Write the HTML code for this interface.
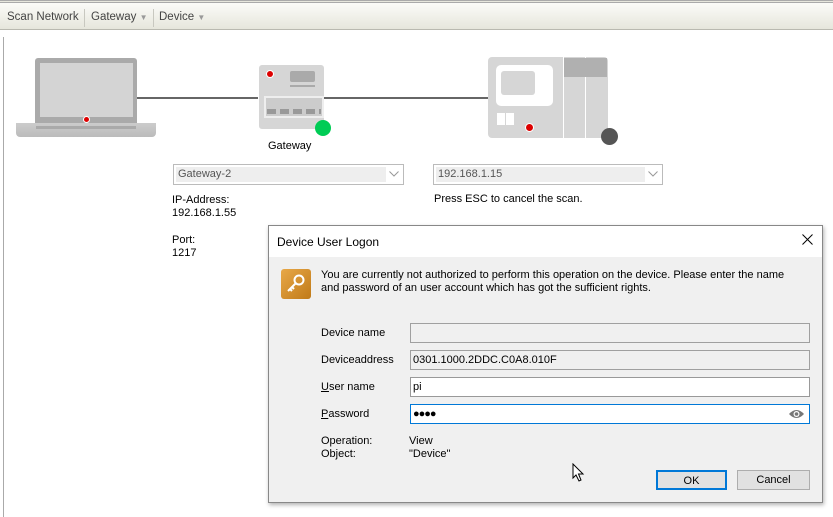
<!DOCTYPE html>
<html><head><meta charset="utf-8"><style>
*{box-sizing:border-box;margin:0;padding:0}
body{width:833px;height:514px;position:relative;overflow:hidden;background:#fff;font-family:"Liberation Sans",Tahoma,sans-serif;font-size:11px;color:#000}
.a{position:absolute}
.tb{left:0;top:0;width:833px;height:30px;border-top:3px double #aaa;background:linear-gradient(#fbfbf8,#e6e6dc);border-bottom:1px solid #b9b9b0;color:#444;font-size:11.5px}
.tb span{position:absolute;top:8px}
.sep{position:absolute;top:6px;width:1px;height:18px;background:#c8c8c0}
.combo{height:21px;border:1px solid #bbb;background:#fff;padding:2px}
.combo div{background:#eee;height:15px;color:#555;padding-left:2px;line-height:15px}
.inp{left:410px;width:400px;height:20px;border:1px solid #999;background:#fff;padding:3px 2px;line-height:13px}
.lbl{left:321px}
.btn{height:20px;border:1px solid #adadad;background:#e1e1e1;text-align:center;line-height:18px}
</style></head><body>
<div class="a tb"><span style="left:7px">Scan Network</span><div class="sep" style="left:84px"></div><span style="left:91px">Gateway <span style="position:static;color:#999;font-size:8px">▼</span></span><div class="sep" style="left:153px"></div><span style="left:159px">Device <span style="position:static;color:#999;font-size:8px">▼</span></span></div>
<div class="a" style="left:3px;top:37px;width:1px;height:480px;background:#aaa"></div>
<div class="a" style="left:137px;top:97px;width:121px;height:2px;background:#666"></div>
<div class="a" style="left:323px;top:97px;width:165px;height:2px;background:#666"></div>
<!-- laptop -->
<div class="a" style="left:35px;top:58px;width:102px;height:65px;background:#aaa;border-radius:3px 3px 0 0"></div>
<div class="a" style="left:40px;top:63px;width:93px;height:54px;background:#d4d4d4"></div>
<div class="a" style="left:84px;top:117px;width:5px;height:5px;border-radius:50%;background:#d00;box-shadow:0 0 0 1px #fff"></div>
<div class="a" style="left:16px;top:123px;width:140px;height:14px;background:linear-gradient(#ccc,#bbb);border-radius:0 0 4px 4px"></div>
<div class="a" style="left:36px;top:126px;width:100px;height:3px;background:#aaa"></div>
<!-- gateway -->
<div class="a" style="left:259px;top:65px;width:65px;height:64px;background:#d6d6d6;border-radius:3px"></div>
<div class="a" style="left:267px;top:71px;width:6px;height:6px;border-radius:50%;background:#d00;box-shadow:0 0 0 1px #fff"></div>
<div class="a" style="left:290px;top:71px;width:25px;height:11px;background:#aaa;border-radius:2px"></div>
<div class="a" style="left:290px;top:85px;width:25px;height:2px;background:#aaa"></div>
<div class="a" style="left:264px;top:96px;width:60px;height:22px;border:2px solid #eee;background:#ccc"></div>
<div class="a" style="left:267px;top:109px;width:54px;height:5px;background:repeating-linear-gradient(90deg,#999 0 9px,transparent 9px 13px)"></div>
<div class="a" style="left:315px;top:120px;width:16px;height:16px;border-radius:50%;background:#0c5"></div>
<div class="a" style="left:268px;top:140px">Gateway</div>
<!-- right device -->
<div class="a" style="left:488px;top:57px;width:120px;height:81px;background:#d6d6d6;border-radius:4px"></div>
<div class="a" style="left:496px;top:65px;width:57px;height:41px;background:#fff;border-radius:5px"></div>
<div class="a" style="left:501px;top:71px;width:34px;height:24px;background:#d6d6d6;border-radius:3px"></div>
<div class="a" style="left:563px;top:57px;width:1px;height:81px;background:#fff"></div>
<div class="a" style="left:585px;top:57px;width:1px;height:81px;background:#fff"></div>
<div class="a" style="left:564px;top:58px;width:43px;height:19px;background:#b0b0b0"></div>
<div class="a" style="left:497px;top:113px;width:8px;height:12px;background:#fff"></div>
<div class="a" style="left:506px;top:113px;width:8px;height:12px;background:#fff"></div>
<div class="a" style="left:526px;top:124px;width:7px;height:7px;border-radius:50%;background:#d00;box-shadow:0 0 0 1px #fff"></div>
<div class="a" style="left:601px;top:128px;width:17px;height:17px;border-radius:50%;background:#555"></div>
<div class="a combo" style="left:173px;top:164px;width:231px"><div style="width:210px">Gateway-2</div></div>
<svg class="a" style="left:389px;top:171px" width="10" height="6"><path d="M0.5 0.5L5 5L9.5 0.5" fill="none" stroke="#999"/></svg>
<div class="a combo" style="left:433px;top:164px;width:230px"><div style="width:209px">192.168.1.15</div></div>
<svg class="a" style="left:648px;top:171px" width="10" height="6"><path d="M0.5 0.5L5 5L9.5 0.5" fill="none" stroke="#999"/></svg>
<div class="a" style="left:434px;top:193px">Press ESC to cancel the scan.</div>
<div class="a" style="left:172px;top:194px;line-height:13px">IP-Address:<br>192.168.1.55</div>
<div class="a" style="left:172px;top:234px;line-height:13px">Port:<br>1217</div>
<!-- dialog -->
<div class="a" style="left:268px;top:225px;width:555px;height:278px;border:1px solid #888;background:#f0f0f0;box-shadow:1px 2px 4px rgba(0,0,0,.3)">
<div style="height:31px;background:#fff;padding:9px 8px;font-size:12px">Device User Logon</div>
</div>
<svg class="a" style="left:802px;top:234px" width="11" height="11"><path d="M0.5 0.5L10.5 10.5M10.5 0.5L0.5 10.5" stroke="#000" stroke-width="1"/></svg>
<div class="a" style="left:281px;top:269px;width:30px;height:30px;border-radius:3px;background:linear-gradient(135deg,#e8a848,#c07a18)"></div>
<svg class="a" style="left:284px;top:272px" width="24" height="24"><circle cx="15" cy="8" r="4.5" fill="none" stroke="#fff" stroke-width="2"/><path d="M12 11L4 19M6 17l2 2M8 15l2 2" stroke="#fff" stroke-width="2" fill="none"/></svg>
<div class="a" style="left:321px;top:269px;line-height:13px">You are currently not authorized to perform this operation on the device. Please enter the name<br>and password of an user account which has got the sufficient rights.</div>
<div class="a lbl" style="top:327px">Device name</div>
<div class="a lbl" style="top:354px">Deviceaddress</div>
<div class="a lbl" style="top:381px"><u>U</u>ser name</div>
<div class="a lbl" style="top:408px"><u>P</u>assword</div>
<div class="a inp" style="top:323px;background:#f0f0f0;border-color:#a0a0a0"></div>
<div class="a inp" style="top:350px;background:#f0f0f0;border-color:#a0a0a0">0301.1000.2DDC.C0A8.010F</div>
<div class="a inp" style="top:377px">pi</div>
<div class="a inp" style="top:404px;border-color:#0078d7;letter-spacing:-1px">●●●●</div>
<svg class="a" style="left:788px;top:408px" width="17" height="12"><path d="M1 6Q8.5-2 16 6Q8.5 14 1 6Z" fill="#777"/><circle cx="8.5" cy="6" r="3" fill="#fff"/><circle cx="8.5" cy="6" r="1.8" fill="#777"/></svg>
<div class="a" style="left:321px;top:435px;line-height:13px">Operation:<br>Object:</div>
<div class="a" style="left:409px;top:435px;line-height:13px">View<br>"Device"</div>
<svg class="a" style="left:572px;top:463px" width="14" height="20"><path d="M1 1L1 15L4 12L7 18L9 17L6.5 11L11 11Z" fill="#fff" stroke="#000" stroke-width="1"/></svg>
<div class="a btn" style="left:656px;top:470px;width:71px;border:2px solid #0078d7">OK</div>
<div class="a btn" style="left:737px;top:470px;width:73px">Cancel</div>
</body></html>
